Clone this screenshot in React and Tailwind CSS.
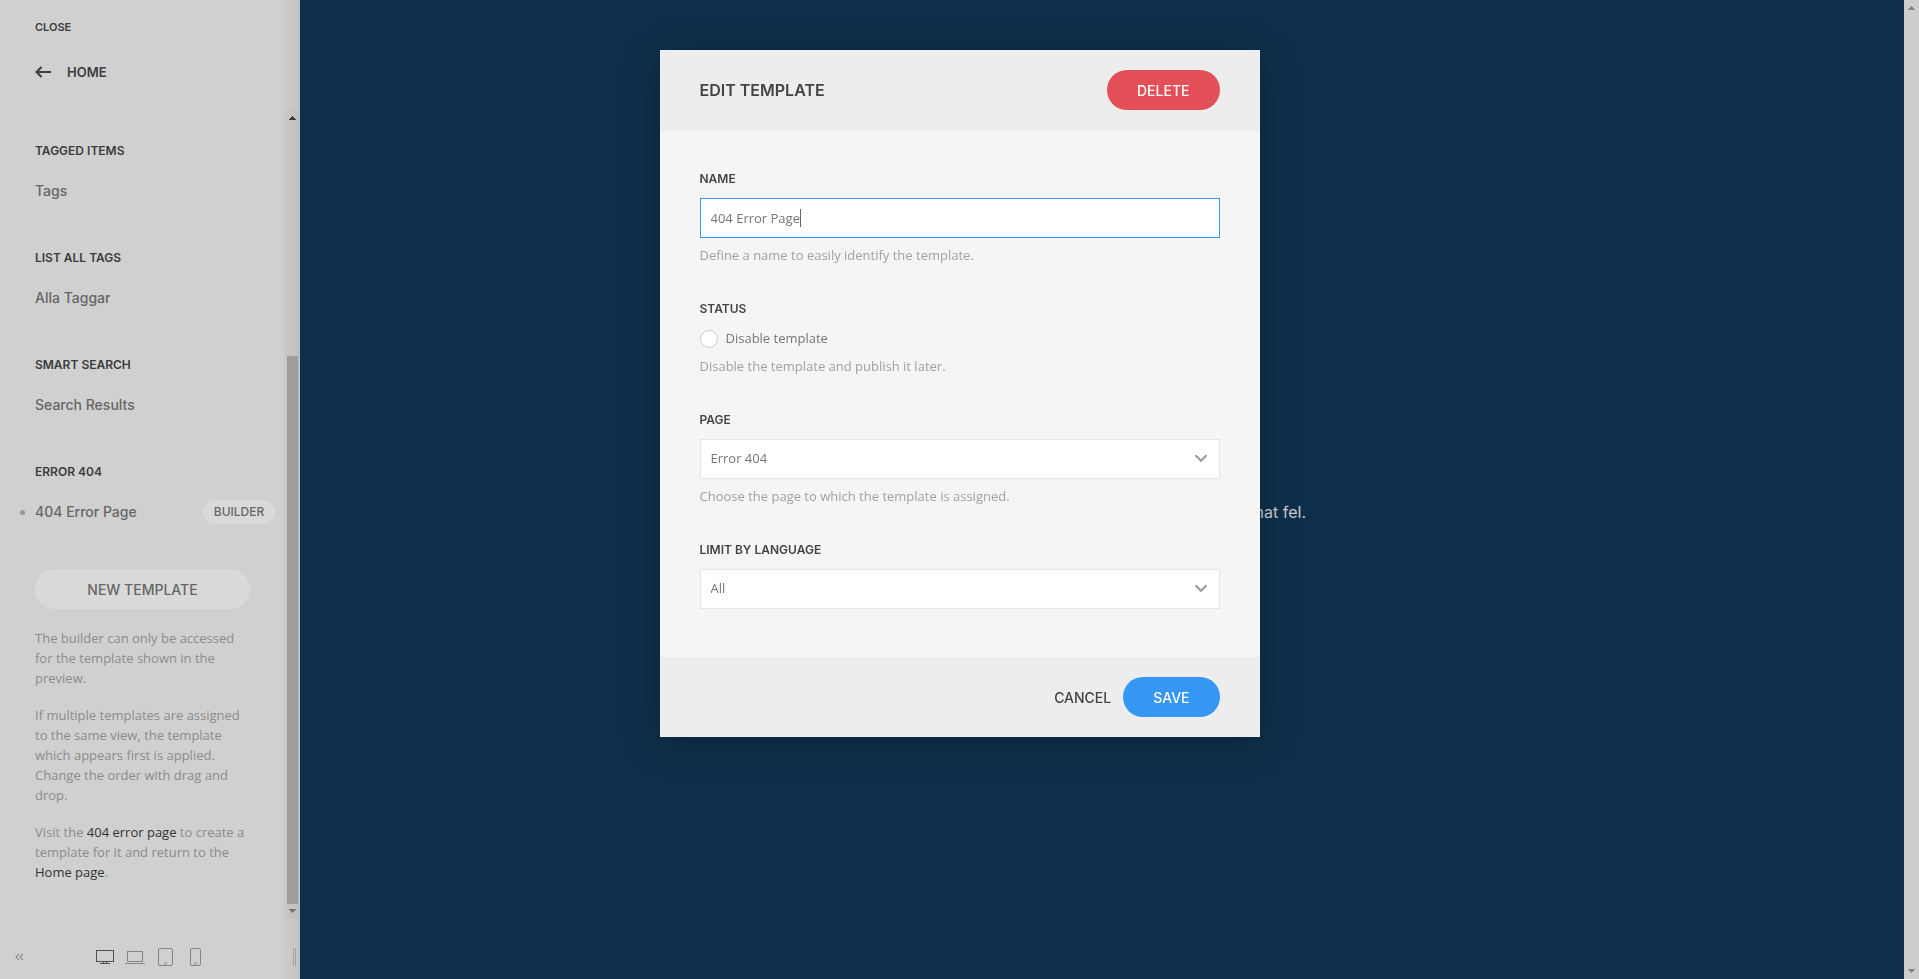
import React, { useState } from "react";

const sections = [
    { title: "TAGGED ITEMS", item: "Tags" },
    { title: "LIST ALL TAGS", item: "Alla Taggar" },
    { title: "SMART SEARCH", item: "Search Results" },
    { title: "ERROR 404", item: "404 Error Page", current: true },
];

function ArrowUp({ className }) {
    return (
        <svg width="7" height="4" viewBox="0 0 7 4" className={className} fill="currentColor" shapeRendering="crispEdges">
            <path d="M3 0h1v1h1v1h1v1h1v1H0V3h1V2h1V1h1z" />
        </svg>
    );
}

function ArrowDown({ className }) {
    return (
        <svg width="7" height="4" viewBox="0 0 7 4" className={className} fill="currentColor" shapeRendering="crispEdges">
            <path d="M0 0h7v1H6v1H5v1H4v1H3V3H2V2H1V1H0z" />
        </svg>
    );
}

function DeviceButtons() {
    return (
        <div className="flex items-center gap-[10px] text-[#858585]">
            <button type="button" aria-label="Desktop" className="text-[#505050]">
                <svg width="20" height="20" viewBox="0 0 20 20" fill="currentColor" className="block">
                    <path fillRule="evenodd" d="M1 3h18v12H1zM2 4v10h16V4z" />
                    <path d="M8 15h1v1H8zM11 15h1v1h-1zM5 16h10v1H5z" />
                </svg>
            </button>
            <button type="button" aria-label="Laptop">
                <svg width="20" height="20" viewBox="0 0 20 20" fill="currentColor" className="block">
                    <path fillRule="evenodd" d="M2 4h16v11H2zM3 5v9h14V5z" />
                    <path d="M0 16h20v1H0z" />
                </svg>
            </button>
            <button type="button" aria-label="Tablet">
                <svg width="20" height="20" viewBox="0 0 20 20" className="block">
                    <rect x="3.5" y="1.5" width="14" height="17" rx="1.5" fill="none" stroke="currentColor" />
                    <circle cx="10.5" cy="16.5" r="1.1" fill="none" stroke="currentColor" strokeWidth="0.8" />
                </svg>
            </button>
            <button type="button" aria-label="Phone">
                <svg width="20" height="20" viewBox="0 0 20 20" className="block">
                    <rect x="5.5" y="1.5" width="10" height="17" rx="1.5" fill="none" stroke="currentColor" />
                    <circle cx="10.5" cy="16.5" r="1.1" fill="none" stroke="currentColor" strokeWidth="0.8" />
                </svg>
            </button>
        </div>
    );
}

function Sidebar() {
    return (
        <aside className="w-[300px] shrink-0 flex flex-col border-r border-[#b9c2be] bg-[linear-gradient(to_left,#c3c3c3,#d0d0d0_20px)] text-[#3c3c3c]">
            <header className="h-[110px] shrink-0 pl-[35px] pt-[17px] font-[Inter,sans-serif] font-semibold">
                <button type="button" className="block text-[11px] leading-5">CLOSE</button>
                <button type="button" className="flex items-center gap-4 mt-[25px] text-[13px] leading-5 font-semibold">
                    <svg width="16" height="12" viewBox="0 0 16 12" fill="none" stroke="currentColor" strokeWidth="2">
                        <path d="M16 6H1.5M6.5 1L1.5 6l5 5" />
                    </svg>
                    HOME
                </button>
            </header>

            <div className="flex flex-1">
                <div className="flex-1 pl-[35px] pt-[31px]">
                    {sections.map((s) => (
                        <section key={s.title} className="h-[107px] font-[Inter,sans-serif]">
                            <h3 className="text-[12px] leading-5 font-semibold">{s.title}</h3>
                            <div className="flex items-center justify-between h-6 mt-[18px] pr-[10px] relative">
                                {s.current && <span className="absolute -left-[15px] w-[5px] h-[5px] rounded-full bg-[#999]" />}
                                <a href="#" className="text-[14px] leading-5 font-medium text-[#666]">{s.item}</a>
                                {s.current && (
                                    <button type="button" className="h-6 w-[72px] rounded-full bg-[#d9d9d9] text-[12px] font-medium text-[#666]">
                                        BUILDER
                                    </button>
                                )}
                            </div>
                        </section>
                    ))}

                    <button type="button" className="block w-[215px] h-10 rounded-full bg-[#d9d9d9] font-[Inter,sans-serif] text-[14px] font-medium text-[#666]">
                        NEW TEMPLATE
                    </button>

                    <div className="w-[215px] mt-[19px] flex flex-col gap-[17px] text-[13px] leading-5 text-[#8c8c8c]">
                        <p>The builder can only be accessed for the template shown in the preview.</p>
                        <p>
                            If multiple templates are assigned to the same view, the template which appears first is
                            applied. Change the order with drag and drop.
                        </p>
                        <p>
                            Visit the <a href="#" className="text-[#333]">404 error page</a> to create a template for it
                            and return to the <a href="#" className="text-[#333]">Home page</a>.
                        </p>
                    </div>
                </div>

                {/* Scrollbar */}
                <div className="w-[14px] flex flex-col items-center pt-[6px] pb-[6px] bg-black/[0.02]">
                    <ArrowUp className="text-[#3c3c3c]" />
                    <div className="flex-1 w-[11px] flex flex-col pt-[236px] pb-[5px]">
                        <div className="flex-1 bg-[#9d9d9d]" />
                    </div>
                    <ArrowDown className="text-[#777]" />
                </div>
            </div>

            <footer className="h-[60px] shrink-0 flex items-center pl-[15px] pr-[3px] pt-4">
                <button type="button" aria-label="Hide sidebar" className="mr-[71px] text-[#858585]">
                    <svg width="9" height="8" viewBox="0 0 9 8" fill="none" stroke="currentColor" strokeWidth="1.1" className="block">
                        <path d="M4 0.8L1 4l3 3.2M8 0.8L5 4l3 3.2" />
                    </svg>
                </button>
                <DeviceButtons />
                <span className="ml-auto w-[3px] h-[18px] border-x border-[#a3a3a3]" />
            </footer>
        </aside>
    );
}

function Preview() {
    return (
        <main className="flex-1 flex bg-[#0e2f4b]">
            <div className="flex-1 flex items-center justify-center pt-11">
                <p className="w-[408px] text-right font-[Inter,sans-serif] text-[16px] leading-6 text-[#ccc]">annat fel.</p>
            </div>
            <div className="w-[15px] flex flex-col items-center justify-between py-[6px] bg-[#cdcdcd] text-[#858585]">
                <ArrowUp />
                <ArrowDown />
            </div>
        </main>
    );
}

function Label({ htmlFor, children }) {
    return (
        <label htmlFor={htmlFor} className="block mb-[10px] font-[Inter,sans-serif] text-[12px] leading-[18px] font-semibold text-[#444]">
            {children}
        </label>
    );
}

function Help({ children }) {
    return <p className="mt-[7px] leading-5 text-[#a1a1a1]">{children}</p>;
}

function Select({ id, options }) {
    return (
        <div className="relative">
            <select id={id} className="block w-full h-10 px-[10px] appearance-none rounded-none border border-[#e5e5e5] bg-white text-[#777] outline-none">
                {options.map((o) => (
                    <option key={o}>{o}</option>
                ))}
            </select>
            <svg width="14" height="9" viewBox="0 0 14 9" className="absolute right-3 top-[15px] pointer-events-none" fill="none" stroke="#999" strokeWidth="2">
                <path d="M1.5 1.2L7 6.8l5.5-5.6" />
            </svg>
        </div>
    );
}

function EditTemplateModal() {
    const [name, setName] = useState("404 Error Page");
    const [disabled, setDisabled] = useState(false);

    return (
        <div className="fixed inset-0 flex items-start justify-center pt-[50px]">
            <form role="dialog" aria-label="Edit template" className="w-[600px] bg-[#f5f5f5] text-[13px] shadow-[0_5px_35px_rgba(0,0,0,0.25)]">
                <div className="flex items-center justify-between h-20 px-10 bg-[#ededed]">
                    <h2 className="font-[Inter,sans-serif] text-[16px] leading-5 font-semibold text-[#444]">EDIT TEMPLATE</h2>
                    <button type="button" className="h-10 px-[30px] rounded-full bg-[#e44e56] font-[Inter,sans-serif] text-[14px] font-medium text-white">
                        DELETE
                    </button>
                </div>

                <div className="flex flex-col gap-[35px] px-10 pt-10 pb-12">
                    <div>
                        <Label htmlFor="name">NAME</Label>
                        <div className="relative">
                            <input
                                id="name"
                                type="text"
                                className="block w-full h-10 px-[10px] border border-[#3696f3] bg-white text-[#777] caret-transparent outline-none"
                                value={name}
                                onChange={(e) => setName(e.target.value)}
                            />
                            {/* Text cursor */}
                            <span className="absolute left-[100px] top-[11px] w-px h-[18px] bg-[#666] pointer-events-none" />
                        </div>
                        <Help>Define a name to easily identify the template.</Help>
                    </div>

                    <div>
                        <Label htmlFor="status">STATUS</Label>
                        <div className="flex items-center gap-2 h-[21px] text-[#777]">
                            <input
                                id="status"
                                type="checkbox"
                                className="w-[18px] h-[18px] appearance-none rounded-full border border-[#ccc] bg-white checked:bg-[#3696f3]"
                                checked={disabled}
                                onChange={(e) => setDisabled(e.target.checked)}
                            />
                            <label htmlFor="status">Disable template</label>
                        </div>
                        <Help>Disable the template and publish it later.</Help>
                    </div>

                    <div>
                        <Label htmlFor="page">PAGE</Label>
                        <Select id="page" options={["Error 404"]} />
                        <Help>Choose the page to which the template is assigned.</Help>
                    </div>

                    <div>
                        <Label htmlFor="language">LIMIT BY LANGUAGE</Label>
                        <Select id="language" options={["All"]} />
                    </div>
                </div>

                <div className="flex items-center justify-end gap-3 h-20 px-10 bg-[#ededed] font-[Inter,sans-serif] text-[14px] font-medium">
                    <button type="button" className="text-[#444]">CANCEL</button>
                    <button type="button" className="h-10 px-[30px] rounded-full bg-[#3696f3] text-white">SAVE</button>
                </div>
            </form>
        </div>
    );
}

export default function App() {
    return (
        <div className="min-h-screen flex font-['Open_Sans',sans-serif]">
            <Sidebar />
            <Preview />
            <EditTemplateModal />
        </div>
    );
}
